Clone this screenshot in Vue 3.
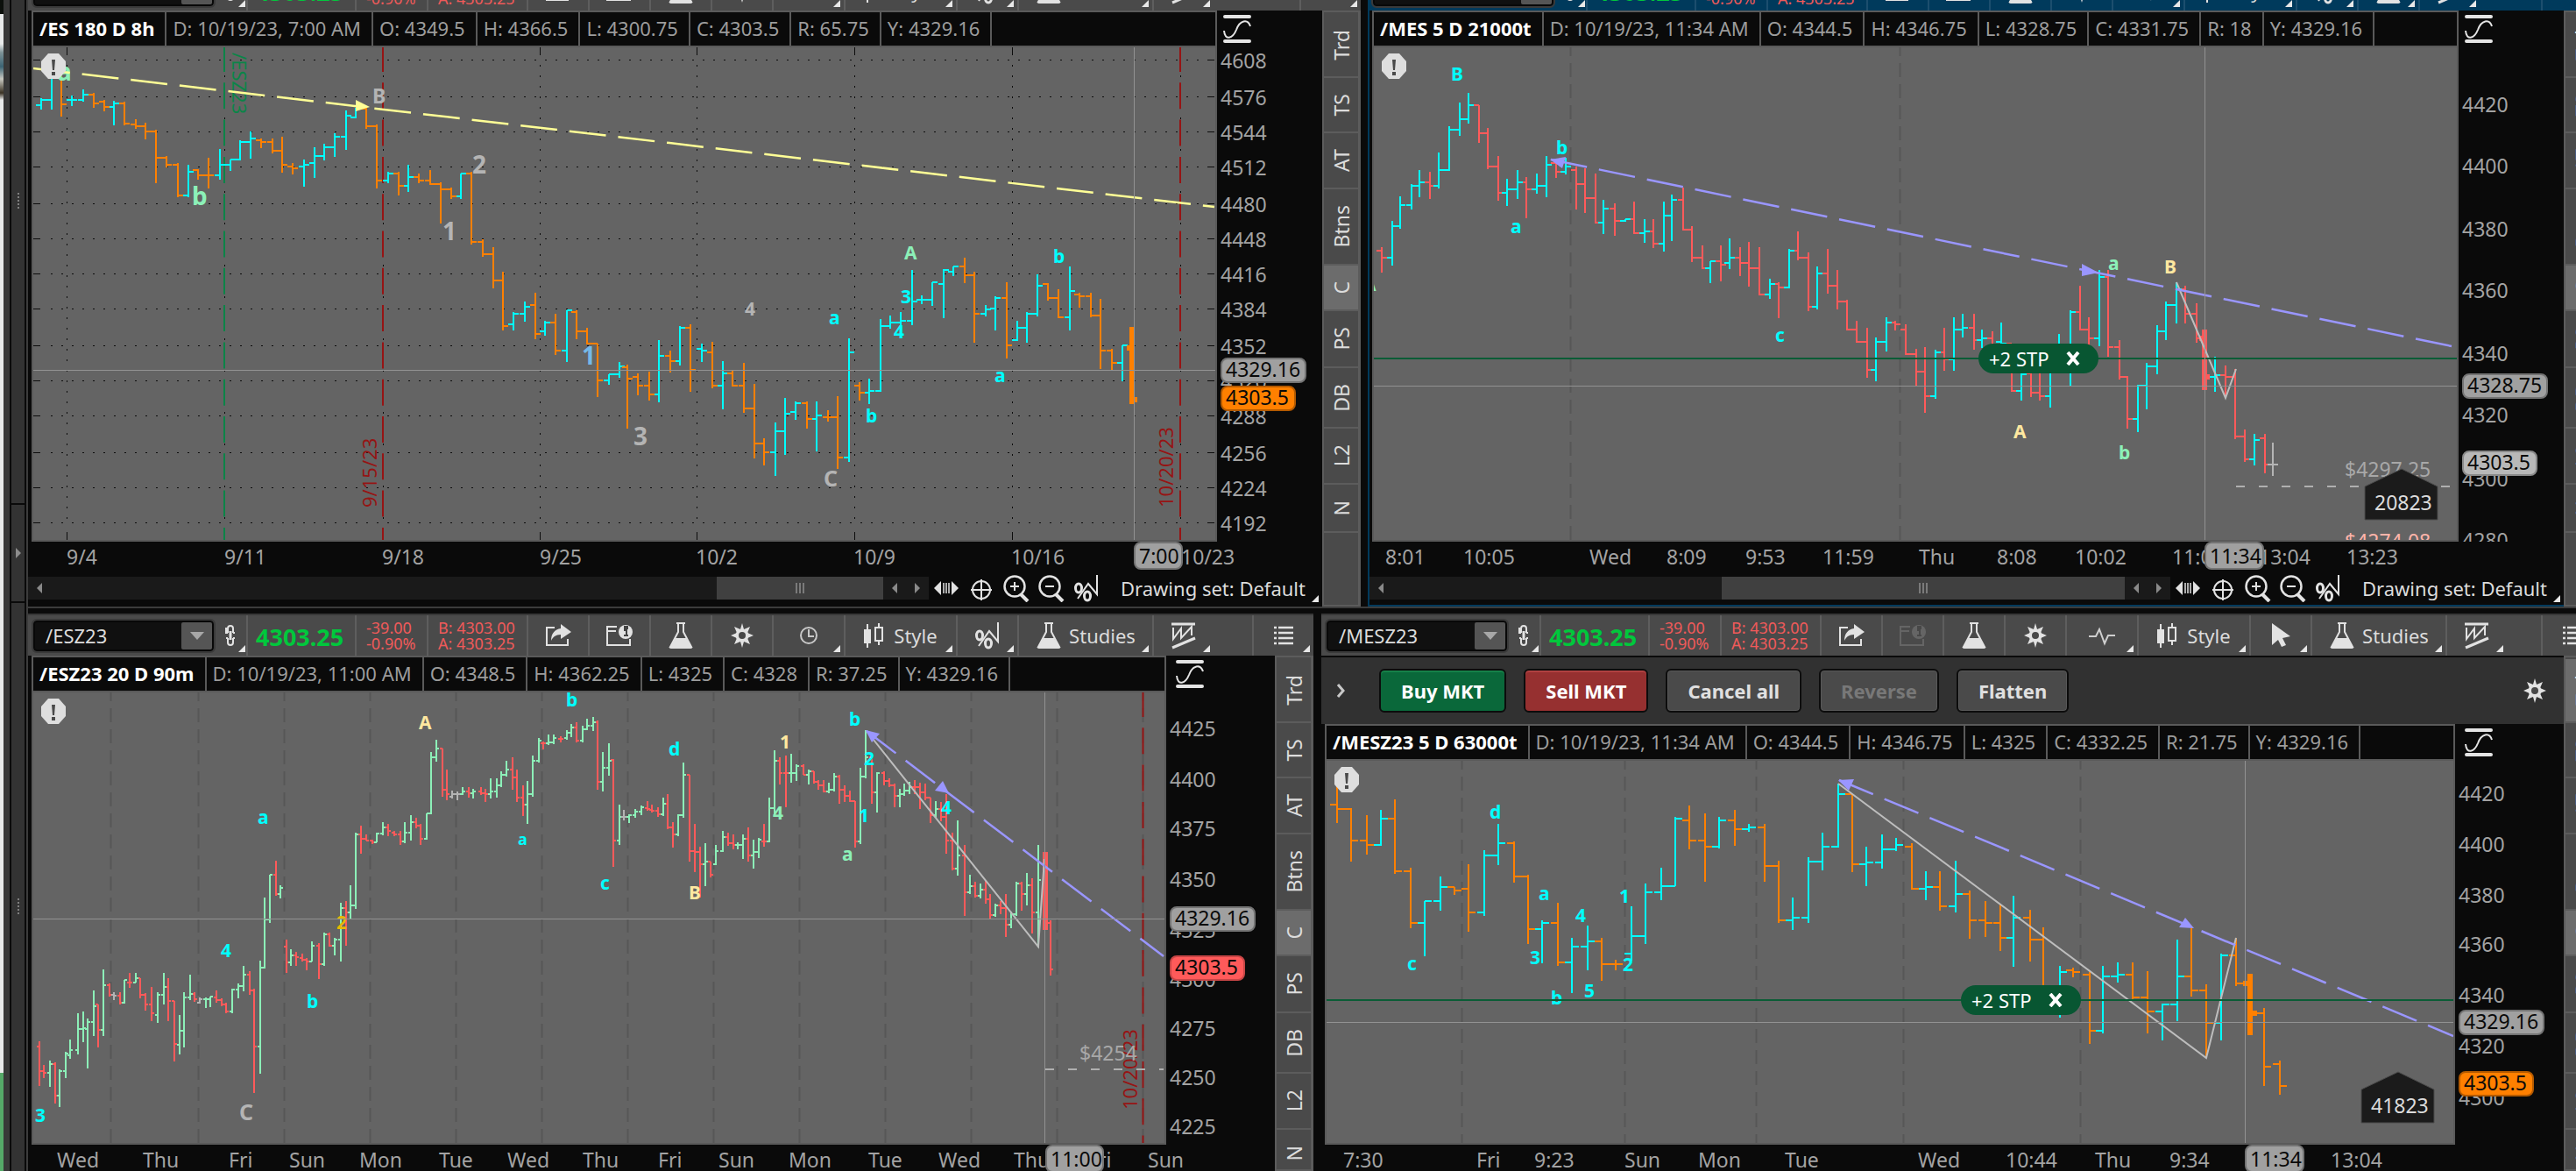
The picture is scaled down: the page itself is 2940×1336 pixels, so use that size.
<template>
  <div class="workspace">
    <aside class="dock">
      <div class="dock-page">
        <div class="page-top"></div>
        <div class="page-body"></div>
        <div class="page-green"></div>
      </div>
      <div class="dock-edge"></div>
      <div class="dock-rail">
        <div class="rail-part"><span class="grip"></span></div>
        <div class="rail-part small">
          <svg width="6" height="12"><path d="M0 0L6 6L0 12Z" fill="#8c8c8c" /></svg>
        </div>
        <div class="rail-part"><span class="grip"></span></div>
      </div>
    </aside>

    <div class="rows">
      <div v-for="(row, ri) in rows" :key="ri" class="row" :class="'row-' + ri">
        <section v-for="p in row" :key="p.id" class="panel" :class="{ active: p.active, bleed: p.bleed }">
          <div class="toolbar">
            <div class="symbol-area">
              <div class="symbol-box">
                <input v-model="p.symbol" aria-label="Symbol" />
                <button class="symbol-drop" aria-label="Symbol list">
                  <svg width="16" height="9"><path d="M0 0H16L8 9Z" fill="#a8a8a8" /></svg>
                </button>
              </div>
              <button class="link-btn" aria-label="Link">
                <svg width="14" height="24" viewBox="0 0 14 24" v-html="icons.link"></svg>
                <i class="corner"></i>
              </button>
            </div>
            <div class="quote last">4303.25</div>
            <div class="quote change"><span>-39.00</span><span>-0.90%</span></div>
            <div class="quote bidask"><span>B: 4303.00</span><span>A: 4303.25</span></div>
            <template v-for="(t, ti) in p.tools" :key="ti">
              <div v-if="t === 'gap'" class="gap"></div>
              <button v-else class="tool" :class="[tools[t].cls, { off: tools[t].off }]" :aria-label="t">
                <svg width="30" height="32" viewBox="0 0 30 32" v-html="icons[tools[t].icon]"></svg>
                <span v-if="tools[t].text">{{ tools[t].text }}</span>
                <i v-if="tools[t].menu" class="corner"></i>
              </button>
            </template>
          </div>

          <div class="body">
            <div class="main">
              <div v-if="p.orders" class="actions">
                <button class="expand" aria-label="Expand">
                  <svg width="10" height="18"><path d="M2 2L8 9L2 16" fill="none" stroke="#c8c8c8" stroke-width="3" /></svg>
                </button>
                <button class="act buy">Buy MKT</button>
                <button class="act sell">Sell MKT</button>
                <button class="act">Cancel all</button>
                <button class="act" disabled>Reverse</button>
                <button class="act">Flatten</button>
                <button class="act-gear" aria-label="Settings">
                  <svg width="30" height="32" viewBox="0 0 30 32" v-html="icons.gear"></svg>
                </button>
              </div>

              <div class="chart" :class="{ wide: p.wideAxis }">
                <div class="chart-left">
                  <div class="ohlc">
                    <strong>{{ p.title }}</strong>
                    <span v-for="c in p.cells" :key="c">{{ c }}</span>
                  </div>
                  <div class="plot">
                    <svg class="canvas">
                      <g :transform="`translate(${-p.x0} ${-p.y0})`">
                        <g v-if="p.grid" stroke="#0c0c0c" stroke-width="2" shape-rendering="crispEdges">
                          <path :d="p.grid.dotsH" stroke-dasharray="2 10" stroke-width="1" />
                          <path :d="p.grid.dotsV" stroke-dasharray="2 10" stroke-width="1" />
                          <path :d="p.grid.ticks" stroke-width="1" />
                        </g>
                        <line
                          v-for="x in p.days" :key="'d' + x" :x1="x" :x2="x" :y1="p.y0" y2="1340"
                          stroke="#575757" stroke-width="2" stroke-dasharray="16 8" stroke-dashoffset="6"
                        />
                        <g v-for="e in p.events" :key="'e' + e.x">
                          <line
                            :x1="e.x" :x2="e.x" :y1="p.y0" y2="1340" :stroke="e.color" stroke-width="2"
                            stroke-dasharray="30 12.3" stroke-dashoffset="2"
                          />
                        </g>
                        <path
                          v-for="b in p.bars" :key="b.key" :d="b.d" :stroke="b.color" :stroke-width="b.w"
                          fill="none" shape-rendering="crispEdges"
                        />
                        <text
                          v-for="e in p.eventText" :key="e.text" class="event" :fill="e.color"
                          :transform="`translate(${e.x} ${e.y}) rotate(${e.turn})`"
                        >{{ e.text }}</text>
                        <text
                          v-for="(w, wi) in p.waves" :key="'w' + wi" class="wave" :x="w[1]" :y="w[2]"
                          :fill="colors[w[3]]" :font-size="w[4] || 21"
                        >{{ w[0] }}</text>
                        <polyline v-if="p.zig" :points="p.zig" fill="none" stroke="#bdbdbd" stroke-width="2" />
                        <path :d="p.trend" :stroke="p.trendColor" stroke-width="2.5" stroke-dasharray="42 14" />
                        <path v-for="a in p.arrows" :key="a" :d="a" :fill="p.trendColor" />
                        <path v-if="p.stop" :d="`M0 ${p.stop.y}H2940`" stroke="#0a5c36" stroke-width="2" />
                        <path :d="`M0 ${p.cross.y}H2940M${p.cross.x} 0V1336`" stroke="#929292" shape-rendering="crispEdges" />
                        <text v-for="l in p.levels" :key="l.text" class="axis-text" :x="l.x" :y="l.y" :fill="l.color">{{ l.text }}</text>
                        <path v-if="p.levelLine" :d="p.levelLine" stroke="#b0b0b0" stroke-width="2" stroke-dasharray="10 16" />
                        <g v-if="p.flag" :transform="`translate(${p.flag.x} ${p.flag.y})`">
                          <path d="M0 20L42 0L83 20V58H0Z" fill="#1b1b1b" stroke="#4c4c4c" />
                          <text class="axis-text" x="11" y="47" fill="#dcdcdc">{{ p.flag.text }}</text>
                        </g>
                        <g :transform="`translate(${p.x0 + 9} ${p.y0 + 7})`">
                          <path d="M8 0H20L28 9V20L20 29H8L0 20V9Z" fill="#dedede" />
                          <path d="M12 7H16L15 19H13ZM12 21H16V25H12Z" fill="#4a4a4a" />
                        </g>
                      </g>
                    </svg>
                    <div v-if="p.stop" class="stop" :style="{ left: p.stop.x - p.x0 + 'px', top: p.stop.y - p.y0 - 17 + 'px' }">
                      <span>+2 STP</span>
                      <button aria-label="Cancel order">
                        <svg width="16" height="16"><path d="M2 1L14 15M14 1L2 15" stroke="#fff" stroke-width="4" /></svg>
                      </button>
                    </div>
                  </div>
                </div>
                <div class="price-axis">
                  <button class="fit" aria-label="Fit scale">
                    <svg width="32" height="32" viewBox="0 0 32 32">
                      <path d="M2 2H30M2 30H30" stroke="#e4e4e4" stroke-width="4" stroke-linecap="round" />
                      <path d="M1 18C2 30 11 27 15 17C19 6 28 4 31 13" fill="none" stroke="#e4e4e4" stroke-width="2" />
                    </svg>
                  </button>
                  <svg class="canvas">
                    <g :transform="`translate(0 ${-p.y0})`">
                      <text v-for="s in p.scale" :key="s[0]" class="axis-text" x="4" :y="s[1] + 8" fill="#a3a3a3">{{ s[0] }}</text>
                      <g v-for="m in p.marks" :key="m.text">
                        <rect x="5" :y="m.y - 13" :width="m.w" height="27" rx="7" :fill="m.color" :stroke="m.edge" stroke-width="2" />
                        <text class="axis-text" x="10" :y="m.y + 8" fill="#0a0a0a">{{ m.text }}</text>
                      </g>
                    </g>
                  </svg>
                </div>
              </div>

              <div class="time-axis">
                <svg class="canvas">
                  <g :transform="`translate(${-p.x0} 0)`">
                    <text v-for="t in p.times" :key="t[1]" class="axis-text" :x="t[1]" y="26" fill="#a3a3a3">{{ t[0] }}</text>
                    <rect :x="p.clock.x + 1" y="1" :width="p.clock.w - 2" height="30" rx="7" fill="#a0a0a0" stroke="#747474" stroke-width="2" />
                    <text class="axis-text" :x="p.clock.x + 6" y="25" fill="#0a0a0a">{{ p.clock.text }}</text>
                  </g>
                </svg>
              </div>

              <div v-if="p.scroll" class="scroll-row">
                <div class="track">
                  <button class="arrow" aria-label="Scroll left"><svg width="6" height="12"><path d="M6 0L0 6L6 12Z" fill="#8a8a8a" /></svg></button>
                  <div class="lane">
                    <div class="thumb" :style="{ width: p.scroll + '%' }"><i></i><i></i><i></i></div>
                  </div>
                  <button class="arrow" aria-label="Step left"><svg width="6" height="12"><path d="M6 0L0 6L6 12Z" fill="#8a8a8a" /></svg></button>
                  <button class="arrow" aria-label="Step right"><svg width="6" height="12"><path d="M0 0L6 6L0 12Z" fill="#8a8a8a" /></svg></button>
                </div>
                <button v-for="z in zooms" :key="z" class="zoom" :aria-label="z">
                  <svg width="30" height="32" viewBox="0 0 30 32" v-html="icons[z]"></svg>
                </button>
                <button class="drawing">Drawing set: Default<i class="corner"></i></button>
              </div>
            </div>

            <nav class="tabs">
              <button v-for="t in tabs" :key="t" :class="{ on: t === 'C' || t === p.tab }"><span>{{ t }}</span></button>
            </nav>
          </div>
        </section>
      </div>
    </div>
  </div>
</template>

<script setup>
import { reactive } from 'vue'

const tabs = ['Trd', 'TS', 'AT', 'Btns', 'C', 'PS', 'DB', 'L2', 'N']
const zooms = ['expand', 'target', 'zoomIn', 'zoomOut', 'percent']

const colors = {
  c: '#00ffff',
  o: '#ff8000',
  r: '#ff5a5a',
  g: '#8cf0b8',
  w: '#b4b4b4',
  y: '#ffe8a0',
  d: '#e8b800',
  b: '#74b8e8'
}

const ink = '#e2e2e2'
const icons = {
  link: `<g fill="none" stroke="${ink}" stroke-width="2"><path d="M4 9V4Q4 1 7 1T10 4V9M4 9H2V3M4 15V20Q4 23 7 23T10 20V15M10 9H12M2 15H4M10 15H12"/><path d="M7 7V17" stroke-width="3"/></g>`,
  share: `<path d="M11 7H2V27H26V20" fill="none" stroke="${ink}" stroke-width="2"/><path d="M18 3L30 12L18 20V15C12 15 9 18 7 22C7 14 11 9 18 8Z" fill="${ink}"/>`,
  info: `<path d="M12 6H1V27H27V20M1 11H11" fill="none" stroke="${ink}" stroke-width="2"/><circle cx="22" cy="12" r="8" fill="${ink}"/><path d="M20 10H23V16H25M20 16H24M21 6H24V8H21Z" fill="none" stroke="#444" stroke-width="2"/>`,
  flask: `<path d="M10 2H20" stroke="${ink}" stroke-width="2"/><path d="M12 2V12L3 29H27L18 12V2" fill="none" stroke="${ink}" stroke-width="2"/><path d="M9 19H21L28 30Q28 31 26 31H4Q2 31 2 30Z" fill="${ink}"/>`,
  gear: `<path d="M15 2L17 9L24 6L21 13L28 16L21 19L24 26L17 23L15 30L13 23L6 26L9 19L2 16L9 13L6 6L13 9Z" fill="${ink}"/><circle cx="15" cy="16" r="7.5" fill="${ink}"/><circle cx="15" cy="16" r="4" fill="#484848"/>`,
  clock: `<circle cx="15" cy="16" r="9" fill="none" stroke="#c8c8c8" stroke-width="2"/><path d="M15 9V17H21" fill="none" stroke="#c8c8c8" stroke-width="2"/>`,
  candle: `<path d="M8 3V30" stroke="${ink}" stroke-width="2"/><path d="M4 9H12V25H4Z" fill="${ink}"/><path d="M21 2V7M21 22V27M17 7H25V22H17Z" fill="none" stroke="${ink}" stroke-width="2"/>`,
  percent: `<ellipse cx="6" cy="16" rx="3.5" ry="5" fill="none" stroke="${ink}" stroke-width="3"/><ellipse cx="16" cy="25" rx="3.5" ry="5" fill="none" stroke="${ink}" stroke-width="3"/><path d="M5 28L17 11L27 23V1" fill="none" stroke="${ink}" stroke-width="2"/>`,
  pattern: `<path d="M1 3H28" stroke="${ink}" stroke-width="3"/><path d="M3 7V20L12 8V19L24 6V16" fill="none" stroke="${ink}" stroke-width="2"/><path d="M2 30L28 19" stroke="${ink}" stroke-width="3"/>`,
  list: `<path d="M9 7H26M9 13H26M9 19H26M9 25H26" stroke="${ink}" stroke-width="2.5"/><path d="M4 7H7M4 13H7M4 19H7M4 25H7" stroke="${ink}" stroke-width="2.5"/>`,
  pulse: `<path d="M0 17H8L12 9L18 25L22 16H30" fill="none" stroke="#cfcfcf" stroke-width="2"/>`,
  cursor: `<path d="M5 2V27L12 21L16 29L21 27L17 19L26 17Z" fill="${ink}"/>`,
  expand: `<path d="M1 16L9 8V24ZM29 16L21 8V24Z" fill="${ink}"/><path d="M12 10V22M15 10V22M18 10V22" stroke="${ink}" stroke-width="1.5"/>`,
  target: `<circle cx="15" cy="18" r="10" fill="none" stroke="${ink}" stroke-width="2"/><path d="M15 6V30M3 18H27" stroke="${ink}" stroke-width="2"/>`,
  zoomIn: `<circle cx="13" cy="14" r="11.5" fill="none" stroke="${ink}" stroke-width="2.5"/><path d="M20 23L28 31" stroke="${ink}" stroke-width="4"/><path d="M8 14H18M13 9V19" stroke="${ink}" stroke-width="2"/>`,
  zoomOut: `<circle cx="13" cy="14" r="11.5" fill="none" stroke="${ink}" stroke-width="2.5"/><path d="M20 23L28 31" stroke="${ink}" stroke-width="4"/><path d="M8 14H18" stroke="${ink}" stroke-width="2"/>`
}

const tools = {
  share: { icon: 'share' },
  info: { icon: 'info' },
  infoOff: { icon: 'info', off: true },
  lab: { icon: 'flask' },
  gear: { icon: 'gear' },
  clock: { icon: 'clock', cls: 'w82', menu: true },
  pulse: { icon: 'pulse', cls: 'w82', menu: true },
  style: { icon: 'candle', cls: 'w128', text: 'Style', menu: true },
  percent: { icon: 'percent', menu: true },
  cursor: { icon: 'cursor', menu: true },
  studies: { icon: 'flask', cls: 'w154', text: 'Studies', menu: true },
  studiesSmall: { icon: 'flask', menu: true },
  pattern: { icon: 'pattern', menu: true },
  list: { icon: 'list', menu: true }
}

// every segment: x scale, x offset, y scale, y offset, "color x open high low close" (uppercase color = selected bar)
function buildBars(segments, tick) {
  const out = {}
  for (const [kx, ox, ky, oy, text] of segments) {
    for (const row of text.trim().split(',')) {
      const [col, ...n] = row.trim().split(/\s+/)
      const x = Math.round(ox + n[0] / kx)
      const [o, h, l, c] = n.slice(1).map(v => Math.round(oy + v / ky))
      const d = `M${x} ${h}V${l}M${x - tick} ${o}H${x}M${x} ${c}H${x + tick}`
      out[col] = (out[col] || '') + d
    }
  }
  return Object.keys(out).map(k => ({
    key: k,
    d: out[k],
    color: colors[k.toLowerCase()],
    w: k === k.toUpperCase() ? 6 : 2
  }))
}

const gridY = [68, 110, 150, 190, 232, 272, 312, 352, 394, 434, 474, 516, 556, 596]
const gridX = [76, 256, 437, 616, 795, 975, 1155, 1347]

const esBars = buildBars([
  [2.0632, 0, 3, 0, `c 96 361 337 375 343,c 121 343 265 375 265,o 145 262 262 399 356,c 170 343 328 363 343,
    c 195 343 306 347 325,o 220 325 318 370 355,o 245 349 341 381 367,c 269 367 346 429 355,o 294 355 347 429 422,
    o 319 427 407 440 433,o 343 433 419 477 451,o 368 451 443 627 541,o 393 541 533 573 565,o 418 565 557 675 668,
    c 443 668 563 675 589,o 467 583 580 615 601,o 491 601 539 645 601,c 517 601 509 615 565,c 542 565 545 585 547,
    c 566 547 479 550 487,c 591 487 449 543 475,o 615 481 475 507 487,o 641 487 475 525 517,o 665 517 467 591 565,
    o 690 571 557 597 577,c 715 571 545 639 565,c 740 559 503 609 535,c 764 535 491 549 505,c 789 505 456 537 469,
    c 814 469 378 513 397,c 838 403 370 406 372,o 863 372 368 440 433,o 888 433 425 645 619,c 913 619 587 627 595,
    o 938 595 589 669 637,c 962 637 563 657 607,o 987 607 594 627 619,o 1012 619 581 634 631,o 1037 631 625 765 649,
    o 1062 649 643 681 673,c 1086 673 593 681 595,o 1111 595 589 836 829,o 1136 829 818 879 871,o 1161 871 846 987 961,
    o 1185 961 929 1130 1117,c 1210 1111 1067 1130 1075,c 1235 1075 1031 1100 1051,o 1260 1045 1001 1162 1142,
    c 1284 1135 1098 1148 1105,o 1309 1105 1073 1215 1201,c 1334 1201 1062 1238 1063,o 1358 1069 1062 1162 1135,
    o 1383 1135 1121 1180 1177,o 1408 1177 1175 1360 1303,c 1433 1303 1280 1318 1280,c 1458 1280 1240 1293 1255,
    o 1478 1256 1248 1468 1297,o 1503 1291 1278 1353 1321,o 1528 1321 1272 1371 1351,c 1552 1351 1163 1377 1219`],
  [1.8667, 740, 3, 0, `o 46 1219 1200 1275 1237,c 68 1237 1116 1251 1123,o 90 1123 1110 1342 1267,c 113 1195 1175 1240 1201,
    o 136 1207 1169 1330 1321,c 158 1321 1235 1401 1279,o 180 1279 1266 1324 1321,o 203 1321 1241 1413 1399,
    o 225 1399 1313 1569 1519,o 247 1519 1500 1593 1549,c 270 1549 1445 1629 1477,c 292 1477 1362 1557 1417,
    c 314 1411 1373 1437 1381,o 337 1381 1374 1467 1435,c 359 1435 1373 1545 1423,o 382 1429 1403 1443 1429,
    o 404 1429 1356 1605 1567,c 427 1567 1158 1582 1207,o 449 1321 1308 1371 1345,c 471 1345 1296 1383 1339,
    c 494 1339 1092 1342 1117,c 516 1117 1080 1125 1105,c 538 1105 1068 1115 1099,c 561 1099 923 1113 1033,
    c 785 1165 1097 1168 1123,c 807 1123 1068 1173 1075,o 987 1201 1195 1270 1243,c 1009 1243 1181 1305 1183,
    O 1031 1190 1120 1383 1369`],
  [1.96, 740, 3, 0, `c 612 1027 1012 1042 1027,c 636 1027 965 1047 967,c 660 973 922 1088 925,c 683 931 911 945 913,
    o 707 913 881 970 943,o 730 943 929 1173 1075,c 754 1075 1043 1082 1058,c 777 1057 1013 1131 1021,
    o 801 1021 965 1227 1183,c 871 1075 940 1082 979,o 894 973 970 1029 1021,o 918 1021 989 1090 1087,
    c 942 1087 911 1132 997,o 965 1009 1001 1053 1015,o 989 1015 1001 1085 1081,o 1012 1081 1024 1263 1201`]
], 6)

const mesBars = buildBars([
  [2.1778, 1540, 3, 0, `r 80 859 845 934 883,c 106 883 755 909 775,c 127 775 671 783 703,c 154 703 629 717 637,
    c 175 637 581 675 625,r 201 625 587 682 637,c 223 637 521 645 583,c 249 583 431 585 445,c 275 445 352 465 409,
    c 297 409 317 423 361,r 323 361 359 489 457,r 345 457 437 579 571,r 371 571 533 687 661,c 393 661 611 705 649,
    c 418 649 581 681 625,r 441 625 605 747 649,c 467 649 593 663 637,c 489 637 533 675 565,r 515 559 556 609 589,
    c 537 589 540 597 571,r 563 583 569 717 631,r 585 631 575 730 679,r 611 679 594 766 763,c 632 763 683 801 715,
    r 659 715 695 807 757,c 685 757 749 758 751,r 707 751 689 802 799,c 733 799 749 831 793,r 755 793 749 849 835,
    c 781 835 689 861 739,c 802 739 665 825 685,r 829 685 641 790 787,r 851 787 773 897 883,r 877 883 839 921 919,
    c 898 919 893 969 895,r 924 895 839 964 907,c 946 901 815 921 883,r 972 883 845 945 901,r 994 901 827 981 919,
    r 1020 919 845 1012 1009,c 1046 1009 953 1023 973,r 1068 973 965 1090 985,c 1094 985 851 988 859,
    r 1116 859 791 891 883,r 1142 883 865 1065 1051,c 1164 1051 911 1059 937,r 1190 937 851 1005 979,
    r 1212 979 923 1060 1033,r 1238 1033 1025 1131 1129,r 1260 1129 1097 1173 1171,r 1286 1171 1121 1293 1267,
    c 1308 1267 1156 1306 1171,c 1334 1171 1085 1204 1105,r 1356 1105 1097 1131 1111,r 1382 1129 1109 1215 1213,
    r 1408 1213 1193 1323 1273,r 1430 1273 1187 1414 1357,c 1456 1357 1198 1366 1207,r 1478 1207 1121 1270 1231,
    c 1503 1231 1085 1270 1129,c 1525 1129 1073 1156 1123,r 1552 1123 1073 1198 1165`],
  [2.24, 2240, 3, 0, `c 50 1165 1127 1190 1159,r 76 1159 1133 1180 1180,c 99 1170 1103 1190 1175,r 126 1175 1175 1340 1339,
    c 149 1339 1270 1372 1280,r 175 1279 1270 1359 1345,r 198 1345 1270 1371 1357,c 225 1357 1270 1395 1273,
    c 247 1200 1144 1270 1200,c 275 1270 1061 1323 1069,r 301 1069 977 1132 1129,r 323 1129 1085 1183 1159,
    c 350 1159 923 1185 949,r 372 949 925 1222 1189,r 400 1189 1164 1298 1291,r 422 1291 1288 1468 1435,
    c 449 1435 1318 1480 1321,c 471 1321 1242 1402 1255,c 498 1255 1114 1282 1135,c 520 1135 1031 1163 1045,
    c 547 1045 965 1108 990,r 570 990 977 1108 1075,r 597 1075 1037 1174 1159,R 619 1159 1128 1336 1290,
    c 646 1290 1222 1342 1285,r 672 1285 1252 1362 1290,r 696 1290 1262 1504 1495,r 722 1495 1470 1582 1573,
    c 745 1573 1486 1594 1507,r 772 1501 1486 1619 1591,w 794 1591 1516 1629 1591`]
], 6)

const eszBars = buildBars([
  [2.0632, 0, 2.4272, 690, `r 92 1224 1209 1333 1292,r 104 1292 1275 1311 1297,g 117 1297 1262 1336 1272,r 129 1272 1267 1382 1360,
    g 141 1360 1287 1390 1292,g 154 1292 1238 1311 1243,g 166 1248 1204 1258 1234,g 183 1234 1131 1245 1175,
    g 195 1175 1126 1210 1172,g 207 1175 1145 1283 1155,g 220 1155 1068 1195 1111,r 232 1108 1107 1225 1176,
    g 244 1176 1010 1195 1054,r 257 1054 1048 1085 1079,w 269 1079 1073 1095 1083,r 282 1083 1073 1108 1103,
    g 294 1103 1038 1105 1040,r 306 1045 1019 1060 1045,g 319 1045 1019 1047 1035,r 331 1035 1033 1089 1079,
    r 343 1079 1076 1124 1108,r 356 1108 1058 1153 1132,g 372 1137 1074 1157 1079,g 385 1079 1019 1108 1059,
    r 397 1059 1034 1153 1098,r 410 1098 1096 1264 1215,g 422 1219 1136 1244 1180,g 434 1180 1073 1225 1088,
    g 447 1088 1024 1095 1078,r 459 1078 1074 1099 1093,w 471 1103 1087 1105 1093,g 484 1093 1087 1117 1093,
    g 496 1093 1084 1115 1086,r 509 1088 1068 1103 1094,r 521 1094 1090 1111 1106,r 533 1106 1102 1132 1127,
    g 546 1127 1063 1130 1065,g 562 1065 1048 1089 1055,g 574 1055 1000 1070 1025,r 587 1025 1014 1080 1068,
    r 599 1068 1063 1352 1224,g 612 1224 985 1299 1005,g 624 1005 811 1008 872,g 636 872 747 881 748,
    r 649 748 709 806 802,g 661 802 776 812 783,r 674 947 927 1020 991,g 686 991 955 1001 972,r 698 972 962 1001 976,
    r 711 979 966 987 982,r 723 982 979 1012 987,g 735 987 933 989 943,r 752 943 937 1036 996,g 764 996 908 1000 913,
    r 776 913 908 947 943,g 789 943 922 972 928,g 802 928 826 987 841,r 814 841 820 943 851,g 826 851 777 870 833,
    g 838 833 631 842 636,r 851 636 611 690 647,r 863 647 637 654 652,r 876 652 651 662 657,g 888 657 631 658 633,
    g 901 633 602 638 617,r 913 617 607 640 627,r 929 631 626 640 637,r 942 637 626 666 656,g 954 656 602 660 631,
    g 967 631 583 652 602,r 979 602 590 620 612,r 991 612 607 666 647,g 1004 647 577 651 578,g 1016 578 407 581 423,
    g 1028 423 374 434 399,r 1041 399 398 531 511,r 1053 511 457 541 525,w 1065 531 515 537 525,w 1078 525 517 541 525,
    g 1090 525 504 527 516,r 1103 516 504 535 521,g 1115 521 510 536 518,r 1132 518 504 526 521,r 1144 521 510 546 525,
    g 1156 525 481 536 516,g 1169 516 481 535 501,g 1181 501 462 504 471,g 1193 471 432 475 457,r 1206 457 422 512 477,
    r 1218 477 457 545 535,r 1231 535 501 584 554,g 1243 554 487 608 525,g 1255 525 417 531 433,g 1268 433 370 436 376,
    r 1280 384 378 400 384,g 1292 384 359 388 380,g 1304 380 359 385 370,r 1321 372 364 382 372,g 1334 370 348 374 354,
    g 1346 354 330 366 341,r 1358 341 325 381 376,g 1371 376 335 380 345,g 1383 345 316 348 336,g 1396 336 311 350 325,
    r 1408 325 320 512 491,g 1420 491 408 516 451,g 1433 451 383 474 433,r 1445 429 427 725 652,g 1458 652 553 666 588,
    w 1470 588 568 597 588,g 1482 588 579 604 583,g 1495 583 565 591 573,g 1511 573 555 582 560,r 1524 563 543 570 565,
    r 1536 567 553 575 570,r 1549 570 560 588 580,g 1561 580 534 586 551`],
  [2.0103, 740, 2.4272, 690, `r 45 551 524 622 617,r 57 617 602 672 636,g 69 636 581 640 583,g 81 583 437 590 471,
    r 94 471 470 711 681,r 106 681 606 740 685,r 118 685 669 810 719,g 130 719 660 779 711,r 142 711 710 754 748,
    g 154 719 665 720 681,g 170 681 627 685 642,r 182 642 631 668 661,r 194 661 636 677 665,g 206 665 658 677 665,
    g 218 665 636 705 647,r 230 647 617 711 695,g 242 695 651 730 685,g 254 685 646 701 651,r 266 656 606 670 656,
    g 278 656 534 658 564,g 290 564 402 588 433,r 302 433 422 497 466,r 315 466 417 561 466,g 327 466 412 492 466,
    g 339 466 441 487 447,r 355 447 442 472 471,g 367 471 457 497 461,r 379 461 461 495 491,r 391 491 485 511 500,
    r 403 500 485 520 516,g 415 516 492 521 513,g 427 513 466 517 476,r 439 476 471 551 511,r 451 511 501 545 530,
    r 463 530 514 546 543,r 475 543 543 672 656,g 487 656 451 662 476,g 499 476 348 480 423,r 512 423 420 551 520,
    g 524 520 464 575 466,r 540 466 461 501 487,r 552 487 480 506 500,r 564 500 494 560 530,g 576 530 510 560 525,
    g 588 525 496 530 515,g 600 515 490 525 506,r 612 506 485 525 506,r 624 506 492 565 520,r 636 520 495 541 535,
    r 648 535 534 604 583,g 660 583 543 590 565,r 672 565 545 600 588,r 684 588 525 690 652,r 697 652 630 735 730,
    g 709 730 597 749 695,r 725 695 666 862 797,g 737 797 748 800 778,r 749 778 768 810 807,g 761 807 772 812 790,
    r 773 790 762 828 815,r 785 815 802 872 860,g 797 860 828 863 832,r 809 832 820 858 840,r 821 840 800 920 885,
    g 833 885 850 895 856,g 845 856 768 862 772,r 857 772 767 846 801,g 869 801 743 833 777,r 881 777 757 909 851,
    g 894 851 665 948 762,R 910 764 685 901 880,r 922 880 875 1026 1010`]
], 3)

const meszBars = buildBars([
  [2.1189, 1490, 2.4272, 690, `o 77 554 500 604 565,o 111 565 563 711 652,o 149 652 582 691 666,c 183 666 568 668 593,
    o 217 593 538 745 739,o 255 739 728 895 880,c 289 880 820 973 821,c 327 821 752 848 782,o 361 782 781 803 792,
    o 395 787 718 905 851,c 433 851 680 862 695,c 467 695 606 720 661,o 505 661 655 769 753,o 539 753 748 939 899,
    c 572 899 873 993 880,o 611 880 825 1001 991,c 645 991 922 1076 947,c 683 947 888 1012 933,o 717 933 922 1041 996,
    o 751 996 984 1012 996,c 789 967 835 985 918,c 823 918 771 939 797,c 861 797 728 818 778,c 895 778 587 780 593,
    o 929 598 557 678 652,o 967 652 577 766 671,c 1001 671 587 675 598,o 1039 598 568 667 622,c 1073 622 606 628 617,
    o 1111 617 606 766 724,o 1145 724 708 881 875,c 1179 875 811 900 866,c 1217 866 699 882 710,c 1250 710 631 736 671,
    c 1289 671 495 673 525,o 1323 525 524 740 719,c 1357 719 669 780 714,c 1395 714 636 731 676,c 1429 676 646 682 666,
    o 1467 671 661 790 787,c 1501 787 738 818 782,o 1535 782 738 847 836`],
  [2.1479, 2210, 2.4272, 690, `c 48 836 708 852 802,o 82 802 792 925 875,o 121 875 820 920 880,o 156 880 830 959 923,
    c 190 923 805 1002 866,o 229 866 845 989 928,o 263 928 893 1060 1060,c 302 1060 1000 1144 1016,o 336 1011 1004 1032 1016,
    o 375 1025 1017 1216 1180,c 409 1180 1000 1188 1030,c 444 1030 990 1046 1025,o 482 1025 990 1092 1088,
    o 517 1088 1014 1187 1127,c 554 1127 1105 1207 1108,c 590 1108 927 1153 1030,o 624 1030 892 1084 1069,
    o 662 1069 1052 1255 1157,c 697 1157 966 1207 972,o 735 972 922 1055 1049,O 770 1049 1023 1192 1132,
    o 804 1132 1117 1333 1278,o 843 1273 1262 1357 1332`]
], 8)

const gray = { color: '#a0a0a0', edge: '#747474' }

const rows = reactive([
  [
    {
      id: 'es', symbol: '/ES', title: '/ES 180 D 8h', x0: 38, y0: 54, scroll: 20,
      cells: ['D: 10/19/23, 7:00 AM', 'O: 4349.5', 'H: 4366.5', 'L: 4300.75', 'C: 4303.5', 'R: 65.75', 'Y: 4329.16'],
      tools: ['share', 'info', 'lab', 'gear', 'clock', 'style', 'percent', 'studies', 'pattern', 'gap', 'list'],
      grid: {
        dotsH: gridY.map(y => `M58 ${y}.5H1370`).join(''),
        dotsV: gridX.map(x => `M${x}.5 74V600`).join(''),
        ticks: gridY.map(y => `M38 ${y}.5H46M1378 ${y}.5H1386`).join('') +
          gridX.slice(0, 7).map(x => `M${x}.5 54V63M${x}.5 607V616`).join('')
      },
      events: [{ x: 256, color: '#0c8448' }, { x: 437, color: '#961414' }, { x: 1347, color: '#961414' }],
      eventText: [
        { text: '/ESZ23', x: 265, y: 60, turn: 90, color: '#0c8448' },
        { text: '9/15/23', x: 430, y: 579, turn: -90, color: '#961414' },
        { text: '10/20/23', x: 1339, y: 579, turn: -90, color: '#961414' }
      ],
      bars: esBars,
      waves: [
        ['a', 65, 92, 'g', 28], ['b', 219, 234, 'g', 28], ['B', 425, 118, 'w', 23], ['2', 539, 198, 'w', 28],
        ['1', 505, 274, 'w', 28], ['1', 664, 416, 'b', 28], ['3', 723, 508, 'w', 28], ['4', 850, 360, 'w'],
        ['C', 940, 555, 'w', 25], ['a', 946, 370, 'c'], ['A', 1032, 296, 'g'], ['3', 1028, 346, 'c'],
        ['4', 1020, 386, 'c'], ['b', 1202, 300, 'c'], ['a', 1135, 436, 'c'], ['b', 988, 482, 'c']
      ],
      trend: 'M38 78L1386 236', trendColor: '#ffff96', arrows: ['M406 114L422 122L406 127Z'],
      cross: { x: 1294.5, y: 422.5 },
      scale: [[4608, 70], [4576, 112], [4544, 152], [4512, 192], [4480, 234], [4448, 274], [4416, 314], [4384, 354],
        [4352, 396], [4320, 436], [4288, 476], [4256, 518], [4224, 558], [4192, 598]],
      marks: [{ text: '4329.16', y: 422, w: 96, ...gray }, { text: '4303.5', y: 454, w: 84, color: '#ff8000', edge: '#b45a00' }],
      times: [['9/4', 76], ['9/11', 256], ['9/18', 436], ['9/25', 616], ['10/2', 794], ['10/9', 974], ['10/16', 1154], ['10/23', 1348]],
      clock: { text: '7:00', x: 1294, w: 56 }
    },
    {
      id: 'mes', symbol: '/MES', title: '/MES 5 D 21000t', x0: 1568, y0: 54, scroll: 55, active: true, bleed: true,
      cells: ['D: 10/19/23, 11:34 AM', 'O: 4344.5', 'H: 4346.75', 'L: 4328.75', 'C: 4331.75', 'R: 18', 'Y: 4329.16'],
      tools: ['share', 'info', 'lab', 'gear', 'pulse', 'style', 'percent', 'studiesSmall', 'pattern', 'gap', 'list'],
      days: [1792.5, 2168.5],
      bars: mesBars,
      waves: [
        ['B', 1656, 92, 'c'], ['b', 1776, 176, 'c'], ['a', 1724, 266, 'c'], ['c', 2026, 390, 'c'], ['A', 1556, 332, 'g'],
        ['A', 2298, 500, 'y'], ['b', 2418, 524, 'g'], ['a', 2406, 308, 'g'], ['B', 2470, 312, 'y']
      ],
      zig: '2484,322 2540,454 2552,421',
      trend: 'M1770 182L2798 395', trendColor: '#9a96ff',
      arrows: ['M1769 182L1787 179L1783 192Z', 'M2376 301L2395 311L2376 315Z'],
      stop: { x: 2258, y: 409 },
      cross: { x: 2516.5, y: 440.5 },
      levels: [{ text: '$4297.25', x: 2676, y: 544, color: '#a8a8a8' }, { text: '$4274.08', x: 2676, y: 626, color: '#ffb4aa' }],
      levelLine: 'M2552 555H2798',
      flag: { x: 2699, y: 535, text: '20823' },
      scale: [[4420, 120], [4400, 190], [4380, 262], [4360, 332], [4340, 404], [4320, 474], [4300, 547], [4280, 617]],
      marks: [{ text: '4328.75', y: 440, w: 96, ...gray }, { text: '4303.5', y: 528, w: 84, color: '#b8b8b8', edge: '#8a8a8a' }],
      times: [['8:01', 1581], ['10:05', 1670], ['Wed', 1814], ['8:09', 1902], ['9:53', 1992], ['11:59', 2080], ['Thu', 2190],
        ['8:08', 2279], ['10:02', 2368], ['11:04', 2479], ['13:04', 2578], ['13:23', 2678]],
      clock: { text: '11:34', x: 2516, w: 68 }
    }
  ],
  [
    {
      id: 'esz', symbol: '/ESZ23', title: '/ESZ23 20 D 90m', x0: 38, y0: 790, wideAxis: true,
      cells: ['D: 10/19/23, 11:00 AM', 'O: 4348.5', 'H: 4362.25', 'L: 4325', 'C: 4328', 'R: 37.25', 'Y: 4329.16'],
      tools: ['share', 'info', 'lab', 'gear', 'clock', 'style', 'percent', 'studies', 'pattern', 'gap', 'list'],
      days: [126.5, 226.5, 324.5, 422.5, 520.5, 618.5, 716.5, 814.5, 912.5, 1010.5, 1108.5, 1206.5, 1304.5],
      events: [{ x: 1304.5, color: '#961414' }],
      eventText: [{ text: '10/20/23', x: 1298, y: 1266, turn: -90, color: '#961414' }],
      bars: eszBars,
      waves: [
        ['3', 40, 1280, 'c'], ['C', 273, 1278, 'w', 25], ['4', 252, 1092, 'c'], ['a', 294, 940, 'c'], ['b', 350, 1150, 'c'],
        ['2', 384, 1060, 'd'], ['A', 478, 832, 'y'], ['a', 591, 964, 'c', 18], ['b', 646, 806, 'c'], ['c', 685, 1015, 'c'],
        ['d', 763, 862, 'c'], ['B', 786, 1026, 'y'], ['1', 890, 854, 'y'], ['4', 882, 935, 'g'], ['a', 961, 982, 'g'],
        ['b', 969, 828, 'c'], ['1', 980, 938, 'c'], ['2', 986, 873, 'c'], ['4', 1074, 929, 'c']
      ],
      zig: '989,834 1185,1080 1192,980',
      trend: 'M989 834L1328 1091', trendColor: '#9a96ff',
      arrows: ['M988 833L1004 837L995 847Z', 'M1083 905L1076 891L1067 902Z'],
      cross: { x: 1192.5, y: 1048.5 },
      levels: [{ text: '$4254', x: 1232, y: 1210, color: '#a8a8a8' }],
      levelLine: 'M1193 1220H1328',
      scale: [[4425, 832], [4400, 890], [4375, 946], [4350, 1004], [4325, 1062], [4300, 1118], [4275, 1174], [4250, 1230], [4225, 1286]],
      marks: [{ text: '4329.16', y: 1048, w: 96, ...gray }, { text: '4303.5', y: 1104, w: 84, color: '#ff5a5a', edge: '#c84646' }],
      times: [['Wed', 65], ['Thu', 163], ['Fri', 261], ['Sun', 330], ['Mon', 410], ['Tue', 501], ['Wed', 579], ['Thu', 665],
        ['Fri', 751], ['Sun', 820], ['Mon', 900], ['Tue', 991], ['Wed', 1071], ['Thu', 1157], ['Fri', 1241], ['Sun', 1310]],
      clock: { text: '11:00', x: 1193, w: 67 }
    },
    {
      id: 'mesz', symbol: '/MESZ23', title: '/MESZ23 5 D 63000t', x0: 1514, y0: 868, wideAxis: true, bleed: true, orders: true, tab: 'Trd',
      cells: ['D: 10/19/23, 11:34 AM', 'O: 4344.5', 'H: 4346.75', 'L: 4325', 'C: 4332.25', 'R: 21.75', 'Y: 4329.16'],
      tools: ['share', 'infoOff', 'lab', 'gear', 'pulse', 'style', 'cursor', 'studies', 'pattern', 'gap', 'list'],
      days: [1668.5, 1854.5, 2004.5, 2172.5, 2374.5],
      bars: meszBars,
      waves: [
        ['d', 1700, 934, 'c'], ['c', 1606, 1107, 'c'], ['a', 1756, 1027, 'c'], ['3', 1746, 1100, 'c'], ['4', 1798, 1052, 'c'],
        ['b', 1770, 1146, 'c'], ['5', 1808, 1138, 'c'], ['1', 1848, 1030, 'c'], ['2', 1852, 1108, 'c']
      ],
      zig: '2098,894 2518,1207 2552,1070',
      trend: 'M2099 890L2800 1182', trendColor: '#9a96ff',
      arrows: ['M2098 890L2116 889L2110 902Z', 'M2494 1047L2504 1059L2487 1058Z'],
      stop: { x: 2238, y: 1141 },
      cross: { x: 2562.5, y: 1166.5 },
      flag: { x: 2695, y: 1223, text: '41823' },
      scale: [[4420, 906], [4400, 964], [4380, 1022], [4360, 1078], [4340, 1136], [4320, 1194], [4300, 1253]],
      marks: [{ text: '4329.16', y: 1166, w: 96, ...gray }, { text: '4303.5', y: 1236, w: 84, color: '#ff8000', edge: '#b45a00' }],
      times: [['7:30', 1533], ['Fri', 1685], ['9:23', 1751], ['Sun', 1854], ['Mon', 1938], ['Tue', 2037], ['Wed', 2189],
        ['10:44', 2289], ['Thu', 2391], ['9:34', 2476], ['13:04', 2660]],
      clock: { text: '11:34', x: 2562, w: 68 }
    }
  ]
])
</script>

<style>
body {
  margin: 0;
  background: #0a0a0a;
}
</style>

<style scoped>
.workspace {
  display: flex;
  height: 100vh;
  overflow: hidden;
  background: #0a0a0a;
  font-family: 'Noto Sans', 'Open Sans', sans-serif;
  font-size: 22px;
  color: #dcdcdc;
}
button, input {
  font: inherit;
  color: inherit;
  border: none;
  padding: 0;
  margin: 0;
  background: none;
}
button {
  display: flex;
  align-items: center;
  justify-content: center;
}
svg {
  display: block;
  flex: none;
}

/* left dock */
.dock {
  display: flex;
  flex: 0 0 32px;
  border-right: 2px solid #3c3c3c;
  box-sizing: border-box;
}
.dock-page {
  display: flex;
  flex-direction: column;
  width: 4px;
}
.page-top {
  height: 16px;
  background: #0c100c;
}
.page-body {
  flex: 1;
  background: linear-gradient(#e8eaea 34px, #7d9296 44px, #3c6474 60px, #c8c8c0 74px, #3a3224 90px, #e8eaea 98px);
}
.page-green {
  height: 112px;
  background: #55a868;
}
.dock-edge {
  width: 7px;
  background: #383838;
}
.dock-rail {
  display: flex;
  flex-direction: column;
  width: 15px;
  margin: 0 2px;
  gap: 2px;
  background: #0a0a0a;
}
.rail-part {
  display: flex;
  align-items: flex-start;
  justify-content: center;
  flex: 5;
  background: #333;
}
.rail-part:first-child {
  flex: 0 0 574px;
}
.rail-part.small {
  flex: 0 0 110px;
  align-items: center;
}
.grip {
  width: 2px;
  height: 18px;
  margin-top: 220px;
  background: repeating-linear-gradient(#808080 0 2px, transparent 2px 4px);
}
.rail-part:last-child .grip {
  margin-top: 337px;
}

/* panels */
.rows {
  display: flex;
  flex-direction: column;
  flex: 1;
  gap: 8px;
  min-width: 0;
}
.row {
  display: grid;
  min-height: 0;
}
.row-0 {
  flex: 692 1 0;
  grid-template-columns: 1521fr 1379fr;
  gap: 8px;
  border-bottom: 2px solid #3c3c3c;
  margin-bottom: -2px;
}
.row-1 {
  flex: 636 1 0;
  grid-template-columns: 1467fr 1432fr;
  gap: 9px;
}
.panel {
  display: flex;
  flex-direction: column;
  min-width: 0;
  min-height: 0;
}
.row-0 .panel {
  margin-top: -34px;
}
.row-1 .panel {
  border-top: 2px solid #383838;
}
.panel.bleed {
  margin-right: -30px;
}

/* toolbar */
.toolbar {
  display: flex;
  flex: 0 0 46px;
  background: #4a4a4a;
  line-height: 30px;
}
.active .toolbar {
  background: #003a5c;
}
.toolbar > * {
  position: relative;
  box-sizing: border-box;
}
.toolbar > * + * {
  border-left: 2px solid #5e5e5e;
}
.active .toolbar > * + * {
  border-left-color: #1c4e6e;
}
.toolbar > .gap {
  flex: 1;
  border: none;
}
.symbol-area {
  display: flex;
  align-items: center;
  width: 249px;
  padding-left: 6px;
}
.symbol-box {
  display: flex;
  width: 206px;
  height: 35px;
  box-sizing: border-box;
  border: 2px solid #080808;
  border-radius: 4px;
  background: #101010;
  outline: 2px solid #3a3a3a;
}
.symbol-box input {
  flex: 1;
  min-width: 0;
  padding-left: 12px;
}
.symbol-drop {
  width: 35px;
  background: #555;
  border-radius: 2px;
}
.link-btn {
  position: relative;
  width: 36px;
  height: 100%;
  margin-left: 1px;
}
.corner {
  position: absolute;
  right: 4px;
  bottom: 4px;
  border-left: 8px solid transparent;
  border-bottom: 8px solid #e8e8e8;
}
.link-btn .corner {
  right: 1px;
}
.quote {
  display: flex;
  flex-direction: column;
  justify-content: center;
}
.last {
  width: 124px;
  padding-left: 9px;
  padding-top: 3px;
  font-size: 27px;
  font-weight: 700;
  color: #00c83c;
}
.change {
  width: 82px;
}
.bidask {
  width: 114px;
}
.change, .bidask {
  padding-left: 11px;
  font-size: 18px;
  line-height: 18px;
  color: #f05a5a;
}
.tool {
  width: 70px;
  gap: 8px;
}
.tool.off svg {
  opacity: 0.18;
}
.w82 {
  width: 82px;
}
.w128 {
  width: 128px;
  padding-right: 4px;
}
.w154 {
  width: 154px;
}

/* order buttons */
.actions {
  display: flex;
  align-items: center;
  flex: 0 0 76px;
  gap: 20px;
  padding-left: 17px;
  margin-left: -6px;
  margin-top: 2px;
  box-sizing: border-box;
  background: #313131;
  font-weight: 700;
}
.expand {
  margin-right: 19px;
}
.act {
  height: 50px;
  padding: 0 23px;
  border: 2px solid #0c0c0c;
  border-radius: 6px;
  background: #4a4a4a;
  color: #e0e0e0;
  box-shadow: inset 0 0 0 1px #585858;
}
.buy {
  background: #0a683a;
  color: #fff;
  box-shadow: inset 0 2px 0 #168048;
}
.sell {
  background: #963030;
  color: #fff;
  box-shadow: inset 0 2px 0 #b04040;
}
.act:disabled {
  color: #787878;
}
.act-gear {
  margin-left: auto;
  margin-right: 18px;
}

/* chart */
.body {
  display: flex;
  flex: 1;
  min-height: 0;
}
.main {
  display: flex;
  flex-direction: column;
  flex: 1;
  min-width: 0;
  padding-left: 6px;
}
.row-0 .main {
  padding-bottom: 8px;
}
.row-0 .active .main {
  padding-left: 5px;
  padding-bottom: 6px;
  border-left: 2px solid #003a5c;
  border-bottom: 2px solid #003a5c;
}
.chart {
  display: flex;
  flex: 1;
  min-height: 0;
}
.chart-left {
  display: flex;
  flex-direction: column;
  flex: 1;
  min-width: 0;
  border: 2px solid #5a5a5a;
  margin-left: -2px;
}
.ohlc {
  display: flex;
  flex: 0 0 38px;
  line-height: 36px;
  border-bottom: 2px solid #5a5a5a;
  color: #9c9c9c;
  white-space: nowrap;
}
.ohlc > * {
  padding: 0 12px 0 7px;
  border-right: 2px solid #5a5a5a;
}
.ohlc strong {
  color: #fff;
}
.plot {
  position: relative;
  flex: 1;
  min-height: 0;
  background: #646464;
}
.canvas {
  width: 100%;
  height: 100%;
  overflow: hidden;
}
.plot .canvas {
  position: absolute;
}
.wave {
  font-weight: 700;
}
.event {
  font-size: 22px;
}
.axis-text {
  font-size: 23px;
}
.stop {
  position: absolute;
  display: flex;
  align-items: center;
  height: 34px;
  padding: 0 21px 0 12px;
  gap: 19px;
  border-radius: 17px;
  background: #085632;
  color: #fff;
}
.price-axis {
  display: flex;
  flex-direction: column;
  flex: 0 0 120px;
}
.wide .price-axis {
  flex-basis: 124px;
}
.fit {
  flex: 0 0 42px;
  justify-content: flex-start;
  padding-left: 7px;
}
.wide .fit {
  padding-left: 11px;
}
.price-axis .canvas {
  flex: 1;
  min-height: 0;
}
.time-axis {
  flex: 0 0 30px;
  min-height: 0;
}
.row-0 .time-axis {
  flex-basis: 40px;
}
.time-axis .canvas {
  overflow: visible;
}

/* scroll row */
.scroll-row {
  display: flex;
  align-items: center;
  flex: 0 0 26px;
  min-height: 0;
  margin-left: -6px;
}
.active .scroll-row {
  margin-left: -5px;
}
.track {
  display: flex;
  flex: 1;
  height: 26px;
  background: #1a1a1a;
}
.arrow {
  width: 26px;
}
.lane {
  display: flex;
  justify-content: flex-end;
  flex: 1;
}
.thumb {
  display: flex;
  align-items: center;
  justify-content: center;
  gap: 2px;
  background: #404040;
}
.thumb i {
  width: 2px;
  height: 12px;
  background: #7a7a7a;
}
.zoom {
  width: 40px;
}
.drawing {
  position: relative;
  height: 32px;
  padding: 0 19px;
}
.drawing .corner {
  bottom: 0;
}

/* side tabs */
.tabs {
  display: flex;
  flex-direction: column;
  flex: 0 0 44px;
  box-sizing: border-box;
  padding-top: 2px;
  border: solid #5c5c5c;
  border-width: 2px 3px 2px 2px;
  background: #4a4a4a;
  font-size: 23px;
}
.tabs button {
  flex: none;
  padding: 18px 0;
  border-bottom: 2px solid #5c5c5c;
}
.tabs .on {
  background: #6c6c6c;
}
.tabs span {
  writing-mode: vertical-rl;
  transform: rotate(180deg);
  line-height: 30px;
}
</style>
